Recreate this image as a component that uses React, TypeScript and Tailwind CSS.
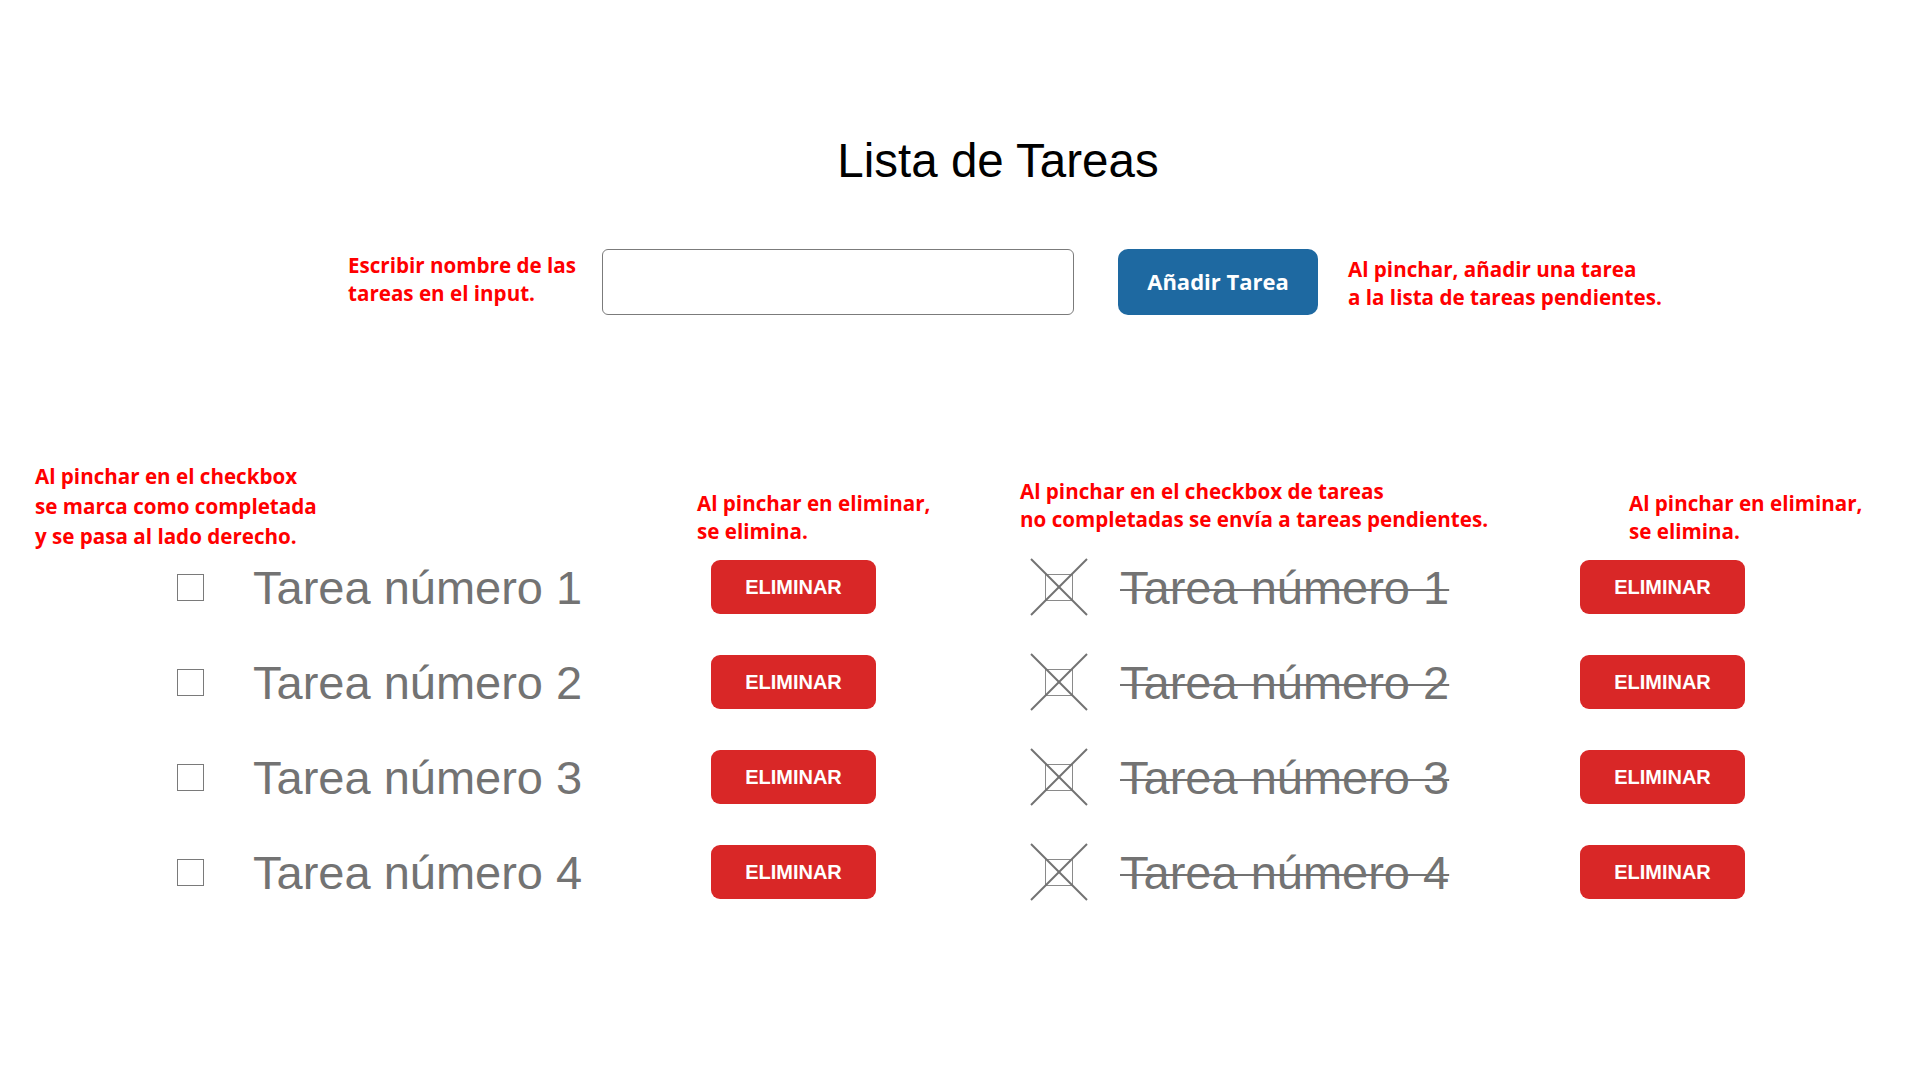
import { useState } from 'react'

type Tarea = { id: number; nombre: string }

const notaClass =
  "text-[20.6px] font-bold text-[#ff0000] font-['Open_Sans','Liberation_Sans',sans-serif] whitespace-nowrap"

// Casilla tachada de las tareas completadas
function CasillaTachada() {
  return (
    <svg width="58" height="58" viewBox="0 0 58 58" className="shrink-0">
      <rect x="15.5" y="16.5" width="27" height="26" fill="none" stroke="#8a8a8a" strokeWidth="1" />
      <line x1="1" y1="1" x2="57" y2="57" stroke="#727272" strokeWidth="2" />
      <line x1="57" y1="1" x2="1" y2="57" stroke="#727272" strokeWidth="2" />
    </svg>
  )
}

function BotonEliminar({ onClick }: { onClick: () => void }) {
  return (
    <button
      onClick={onClick}
      className="w-[165px] h-[54px] shrink-0 rounded-[9px] bg-[#d92727] text-white text-[20px] font-bold font-['Liberation_Sans',Arial,sans-serif] flex items-center justify-center"
    >
      ELIMINAR
    </button>
  )
}

export default function App() {
  const [pendientes, setPendientes] = useState<Tarea[]>([
    { id: 1, nombre: 'Tarea número 1' },
    { id: 2, nombre: 'Tarea número 2' },
    { id: 3, nombre: 'Tarea número 3' },
    { id: 4, nombre: 'Tarea número 4' },
  ])
  const [completadas, setCompletadas] = useState<Tarea[]>([
    { id: 11, nombre: 'Tarea número 1' },
    { id: 12, nombre: 'Tarea número 2' },
    { id: 13, nombre: 'Tarea número 3' },
    { id: 14, nombre: 'Tarea número 4' },
  ])
  const [texto, setTexto] = useState('')

  const anadirTarea = () => {
    if (!texto.trim()) return
    setPendientes([...pendientes, { id: Date.now(), nombre: texto.trim() }])
    setTexto('')
  }

  const completar = (t: Tarea) => {
    setPendientes(pendientes.filter((p) => p.id !== t.id))
    setCompletadas([...completadas, t])
  }

  const reabrir = (t: Tarea) => {
    setCompletadas(completadas.filter((c) => c.id !== t.id))
    setPendientes([...pendientes, t])
  }

  return (
    <div className="min-h-screen w-full bg-white font-['Liberation_Sans',Arial,sans-serif]">
      {/* Título */}
      <h1 className="pt-[137px] pl-[76px] text-center text-[47.5px] leading-none text-black">Lista de Tareas</h1>

      {/* Fila de entrada */}
      <div className="mt-[64px] flex items-start pl-[348px]">
        <div className={`${notaClass} w-[254px] mt-[2px] leading-[28px]`}>
          Escribir nombre de las
          <br />
          tareas en el input.
        </div>
        <input
          value={texto}
          onChange={(e) => setTexto(e.target.value)}
          className="w-[472px] h-[66px] shrink-0 rounded-[6px] border border-[#7b7b7b] px-4 text-[22px] outline-none"
        />
        <button
          onClick={anadirTarea}
          className="ml-[44px] w-[200px] h-[66px] shrink-0 rounded-[10px] bg-[#1e69a1] text-white text-[22px] font-bold font-['Open_Sans','Liberation_Sans',sans-serif]"
        >
          Añadir Tarea
        </button>
        <div className={`${notaClass} ml-[30px] mt-[6px] leading-[28px]`}>
          Al pinchar, añadir una tarea
          <br />
          a la lista de tareas pendientes.
        </div>
      </div>

      {/* Listas */}
      <div className="mt-[146px] flex">
        {/* Pendientes */}
        <div className="w-[1020px] shrink-0">
          <div className="flex h-[79px] items-start">
            <div className={`${notaClass} w-[697px] pl-[35px] leading-[30px]`}>
              Al pinchar en el checkbox
              <br />
              se marca como completada
              <br />y se pasa al lado derecho.
            </div>
            <div className={`${notaClass} mt-[28px] leading-[28px]`}>
              Al pinchar en eliminar,
              <br />
              se elimina.
            </div>
          </div>
          {pendientes.map((t) => (
            <div key={t.id} className="flex h-[95px] items-center">
              <input
                type="checkbox"
                checked={false}
                onChange={() => completar(t)}
                className="ml-[177px] w-[27px] h-[27px] shrink-0 appearance-none border border-[#7a7a7a] bg-white"
              />
              <span className="ml-[49px] w-[458px] shrink-0 text-[47px] leading-none text-[#737373] whitespace-nowrap">
                {t.nombre}
              </span>
              <BotonEliminar onClick={() => setPendientes(pendientes.filter((p) => p.id !== t.id))} />
            </div>
          ))}
        </div>

        {/* Completadas */}
        <div className="flex-1">
          <div className="flex h-[79px] items-start">
            <div className={`${notaClass} w-[609px] mt-[16px] leading-[28px]`}>
              Al pinchar en el checkbox de tareas
              <br />
              no completadas se envía a tareas pendientes.
            </div>
            <div className={`${notaClass} mt-[28px] leading-[28px]`}>
              Al pinchar en eliminar,
              <br />
              se elimina.
            </div>
          </div>
          {completadas.map((t) => (
            <div key={t.id} className="flex h-[95px] items-center">
              <button onClick={() => reabrir(t)} className="ml-[10px] shrink-0">
                <CasillaTachada />
              </button>
              <span className="ml-[32px] w-[460px] shrink-0 text-[47px] leading-none text-[#737373] line-through decoration-[2px] whitespace-nowrap">
                {t.nombre}
              </span>
              <BotonEliminar onClick={() => setCompletadas(completadas.filter((c) => c.id !== t.id))} />
            </div>
          ))}
        </div>
      </div>
    </div>
  )
}
